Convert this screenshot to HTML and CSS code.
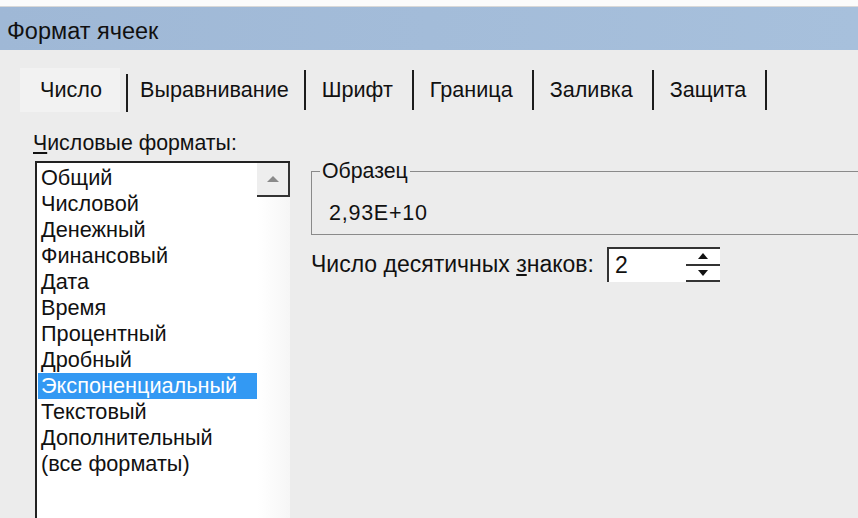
FILE: index.html
```html
<!DOCTYPE html>
<html lang="ru">
<head>
  <meta charset="UTF-8" />
  <title>Формат ячеек</title>
  <link rel="stylesheet" href="styles.css">
</head>
<body>
  <div class="sheet-strip"></div>

  <div class="titlebar">Формат ячеек</div>

  <div class="tabs">
    <div class="tab active">Число</div>
    <div class="tab narrow">Выравнивание</div>
    <div class="tab">Шрифт</div>
    <div class="tab">Граница</div>
    <div class="tab">Заливка</div>
    <div class="tab">Защита</div>
  </div>

  <div class="panel">
    <div class="left-col">
      <div class="label"><u>Ч</u>исловые форматы:</div>
      <div class="listbox">
        <ul class="items">
          <li>Общий</li>
          <li>Числовой</li>
          <li>Денежный</li>
          <li>Финансовый</li>
          <li>Дата</li>
          <li>Время</li>
          <li>Процентный</li>
          <li>Дробный</li>
          <li class="selected">Экспоненциальный</li>
          <li>Текстовый</li>
          <li>Дополнительный</li>
          <li>(все форматы)</li>
        </ul>
        <div class="scrollbar">
          <div class="scroll-btn">
            <svg width="14" height="8" viewBox="0 0 14 8"><path d="M1 7 L7 1 L13 7 Z" fill="#8a8a8a"/></svg>
          </div>
        </div>
      </div>
    </div>

    <div class="right-col">
      <div class="sample">
        <span class="legend">Образец</span>
        <div class="sample-value">2,93E+10</div>
      </div>

      <div class="decimals">
        <span>Число десятичных <u>з</u>наков:</span>
        <div class="spinner">
          <span class="spin-value">2</span>
          <div class="spin-btns">
            <div class="spin-btn">
              <svg width="10" height="6" viewBox="0 0 10 6"><path d="M0 6 L5 0 L10 6 Z" fill="#111"/></svg>
            </div>
            <div class="spin-btn">
              <svg width="10" height="6" viewBox="0 0 10 6"><path d="M0 0 L5 6 L10 0 Z" fill="#111"/></svg>
            </div>
          </div>
        </div>
      </div>
    </div>
  </div>
</body>
</html>
```

FILE: styles.css
```css
body {
  margin: 0;
  width: 858px;
  height: 518px;
  overflow: hidden;
  display: flex;
  flex-direction: column;
  background: #ececec;
  font-family: 'Liberation Sans', Arial, sans-serif;
  color: #111;
}

.sheet-strip {
  height: 6px;
  flex-shrink: 0;
  background: #fbfbfb;
  border-bottom: 1px solid #d8d8d8;
}

.titlebar {
  height: 43px;
  flex-shrink: 0;
  background: linear-gradient(to right, #9fb8d6, #a7c0dc);
  font-size: 23.5px;
  line-height: 48px;
  padding-left: 7px;
}

.tabs {
  display: flex;
  align-items: center;
  flex-shrink: 0;
  padding-left: 20px;
  margin-top: 18px;
  height: 44px;
}

.tab {
  font-size: 21.6px;
  line-height: 40px;
  padding: 0 19px 0 16px;
  border-right: 2px solid #1c1c1c;
}

.tab.narrow {
  padding: 0 15px 0 12px;
}

.tab.active {
  padding: 2px 18px 2px 20px;
  margin-right: 8px;
  border-right: none;
  background: #f2f2f2;
  position: relative;
}

.tab.active::after {
  content: "";
  position: absolute;
  right: -8px;
  top: 6px;
  bottom: 0;
  border-right: 2px solid #1c1c1c;
}

.panel {
  display: flex;
  flex: 1;
  min-height: 0;
  padding-top: 16px;
}

.left-col {
  display: flex;
  flex-direction: column;
  width: 290px;
  padding-left: 33px;
  box-sizing: border-box;
}

.label {
  font-size: 21.3px;
  line-height: 30px;
  margin-bottom: 3px;
}

.listbox {
  display: flex;
  flex: 1;
  background: #fff;
  border-top: 2px solid #222;
  border-left: 2px solid #222;
  margin-left: 2px;
}

.items {
  list-style: none;
  margin: 0;
  padding: 2px 0 0 1px;
  flex: 1;
}

.items li {
  font-size: 21.7px;
  line-height: 26px;
  padding-left: 3px;
}

.items li.selected {
  background: #3399f3;
  color: #fff;
  margin-right: -1px;
}

.scrollbar {
  width: 33px;
  background: linear-gradient(to right, #fff, #f6f6f6);
}

.scroll-btn {
  height: 32px;
  background: #eeeeee;
  border-right: 2px solid #333;
  border-bottom: 2px solid #333;
  display: flex;
  align-items: center;
  justify-content: center;
}

.right-col {
  flex: 1;
  padding-left: 21px;
}

.sample {
  margin-top: 43px;
  height: 62px;
  border: 1px solid #8a8a8a;
  border-right: none;
  position: relative;
}

.legend {
  position: absolute;
  left: 8px;
  top: -13px;
  background: #ececec;
  padding: 0 2px;
  font-size: 21.3px;
  line-height: 24px;
}

.sample-value {
  font-size: 21.5px;
  letter-spacing: 0.75px;
  line-height: 26px;
  padding: 28px 0 0 17px;
}

.decimals {
  display: flex;
  align-items: center;
  margin-top: 12px;
  font-size: 23px;
}

.spinner {
  display: flex;
  align-items: center;
  width: 113px;
  height: 35px;
  margin-left: 13px;
  background: #fff;
  border-top: 2px solid #333;
  border-left: 2px solid #333;
  box-sizing: border-box;
}

.spin-value {
  flex: 1;
  padding-left: 6px;
  font-size: 23px;
}

.spin-btns {
  width: 34px;
  height: 100%;
  display: flex;
  flex-direction: column;
  border-bottom: 2px solid #333;
  box-sizing: border-box;
}

.spin-btn {
  flex: 1;
  display: flex;
  align-items: center;
  justify-content: center;
}

.spin-btn + .spin-btn {
  border-top: 2px solid #333;
}
```
